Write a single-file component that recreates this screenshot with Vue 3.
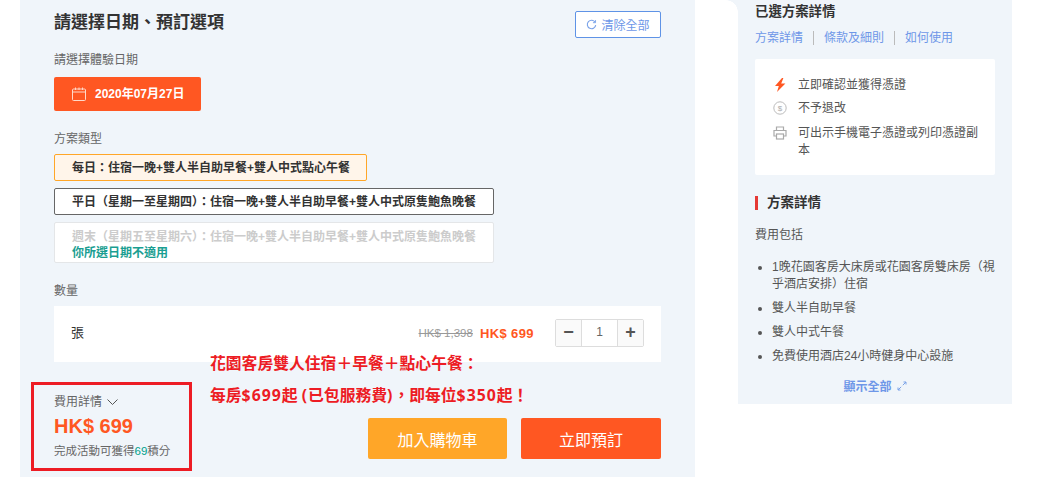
<script setup>
const includes = ['1晚花園客房大床房或花園客房雙床房（視乎酒店安排）住宿', '雙人半自助早餐', '雙人中式午餐', '免費使用酒店24小時健身中心設施']
</script>

<template>
  <div class="page">
    <section class="booking">
      <div class="heading-row">
        <h2>請選擇日期、預訂選項</h2>
        <button class="clear">
          <svg width="11" height="11" viewBox="0 0 12 12" fill="none" stroke="#7aa2e8" stroke-width="1.2"><path d="M10 3.6A4.6 4.6 0 1 0 10.6 6.6"/><path d="M10.4 1.2v2.8H7.6" stroke-width="1"/></svg>
          清除全部
        </button>
      </div>
      <div class="label date-label">請選擇體驗日期</div>
      <button class="date">
        <svg width="14" height="14" viewBox="0 0 14 14" fill="none" stroke="#ffd9c9" stroke-width="1"><rect x=".5" y="2" width="13" height="11.5" rx="1"/><path d="M.5 5h13M3.5 .5V3M7 .5V3M10.5 .5V3"/></svg>
        <span>2020年07月27日</span>
      </button>
      <div class="label type-label">方案類型</div>
      <div class="options">
        <div class="opt active">每日：住宿一晚+雙人半自助早餐+雙人中式點心午餐</div>
        <div class="opt normal">平日（星期一至星期四）：住宿一晚+雙人半自助早餐+雙人中式原隻鮑魚晚餐</div>
        <div class="opt off">
          <div>週末（星期五至星期六）：住宿一晚+雙人半自助早餐+雙人中式原隻鮑魚晚餐</div>
          <div class="off-note">你所選日期不適用</div>
        </div>
      </div>
      <div class="label qty-label">數量</div>
      <div class="qty">
        <span class="unit">張</span>
        <span class="old">HK$ 1,398</span>
        <span class="now">HK$ 699</span>
        <div class="stepper">
          <span class="step">−</span>
          <span class="val">1</span>
          <span class="step">+</span>
        </div>
      </div>
      <div class="footer">
        <div class="fee">
          <div class="fee-label">費用詳情
            <svg width="11" height="6" viewBox="0 0 11 6" fill="none" stroke="#555" stroke-width="1"><path d="M.5 .5l5 5 5-5"/></svg>
          </div>
          <div class="fee-price">HK$ 699</div>
          <div class="fee-note">完成活動可獲得<em>69</em>積分</div>
        </div>
        <div class="actions">
          <button class="cart">加入購物車</button>
          <button class="buy">立即預訂</button>
        </div>
      </div>
      <div class="promo">
        <p>花園客房雙人住宿＋早餐＋點心午餐：</p>
        <p>每房<span class="num">$699</span>起 <span class="num">(</span>已包服務費<span class="num">)</span>，即每位<span class="num">$350</span>起！</p>
      </div>
      <div class="redbox"></div>
    </section>

    <aside class="side">
      <h3>已選方案詳情</h3>
      <nav class="tabs">
        <a>方案詳情</a><i></i><a>條款及細則</a><i></i><a>如何使用</a>
      </nav>
      <div class="notes">
        <div class="note">
          <svg width="14" height="14" viewBox="0 0 14 14"><path d="M9 0 2 8h3.8L4 14 12.4 5.4H8.2L10.4 0z" fill="#ff5722"/></svg>
          <span>立即確認並獲得憑證</span>
        </div>
        <div class="note">
          <svg width="14" height="14" viewBox="0 0 14 14" fill="none"><circle cx="7" cy="7" r="6.2" stroke="#bbb"/><text x="7" y="10" text-anchor="middle" font-size="8" fill="#aaa" font-family="Liberation Sans">$</text></svg>
          <span>不予退改</span>
        </div>
        <div class="note print">
          <svg width="14" height="14" viewBox="0 0 14 14" fill="none" stroke="#aaa" stroke-width="1.2"><path d="M3.5 4V1h7v3"/><path d="M3 10H1V4.5h12V10h-2"/><rect x="3.5" y="8" width="7" height="5"/></svg>
          <span>可出示手機電子憑證或列印憑證副本</span>
        </div>
      </div>
      <h4>方案詳情</h4>
      <div class="inc-title">費用包括</div>
      <ul>
        <li v-for="t in includes" :key="t">{{ t }}</li>
      </ul>
      <a class="more">顯示全部
        <svg width="10" height="10" viewBox="0 0 10 10" fill="none" stroke="#7aa2e8" stroke-width="1"><path d="M5.8 4.2 9 1M6.5 1H9v2.5M4.2 5.8 1 9M3.5 9H1V6.5"/></svg>
      </a>
    </aside>
  </div>
</template>

<style>
html, body { margin: 0; background: #fff; }
</style>

<style scoped>
.page {
  width: 1045px;
  height: 477px;
  overflow: hidden;
  display: flex;
  align-items: flex-start;
  font-family: "Liberation Sans", "Noto Sans CJK TC", sans-serif;
  color: #333;
}
button { font-family: inherit; border: 0; cursor: pointer; padding: 0; }
.booking {
  position: relative;
  box-sizing: border-box;
  margin-left: 20px;
  width: 675px;
  height: 477px;
  padding: 11px 34px 0;
  background: #f0f5fa;
}
.heading-row { display: flex; justify-content: space-between; align-items: flex-start; height: 27px; }
h2 { margin: 0; font-size: 17px; line-height: 24px; font-weight: 700; color: #333; }
.clear {
  display: flex; align-items: center; justify-content: center; gap: 4px;
  box-sizing: border-box; width: 86px; height: 27px;
  background: #fff; border: 1px solid #5f93e6; border-radius: 2px;
  color: #6e97e8; font-size: 12px;
}
.label { font-size: 12px; line-height: 16px; color: #666; }
.date-label { margin-top: 14px; }
.date {
  display: flex; align-items: center; gap: 9px;
  box-sizing: border-box; width: 147px; height: 34px; margin-top: 9px; padding-left: 18px;
  background: #ff5722; border-radius: 2px; color: #fff; font-size: 12px; font-weight: 700;
}
.date span { padding-bottom: 3px; }
.type-label { margin-top: 20px; }
.options { margin-top: 7px; display: flex; flex-direction: column; align-items: flex-start; gap: 7px; }
.opt {
  box-sizing: border-box; height: 27px; padding: 0 17px;
  border-radius: 2px; font-size: 12px; line-height: 26px; font-weight: 700; color: #333;
  white-space: nowrap;
}
.active { width: 313px; background: #fff5ea; border: 1px solid #ffa628; }
.normal { width: 440px; background: #fff; border: 1px solid #666; }
.off { width: 440px; height: 41px; background: #fff; border: 1px solid #e4e6e8; padding-top: 6px; color: #ccc; line-height: 16px; }
.off-note { color: #1a9e92; font-size: 12px; line-height: 16px; }
.qty-label { margin-top: 20px; }
.qty {
  display: flex; align-items: center; box-sizing: border-box;
  width: 607px; height: 56px; margin-top: 7px; padding: 0 17px 2px;
  background: #fff; font-size: 12px;
}
.unit { flex: 1; font-size: 13px; color: #333; padding-bottom: 4px; }
.old { color: #999; text-decoration: line-through; font-size: 11.5px; margin-right: 7px; }
.now { color: #ff5722; font-weight: 700; font-size: 13px; letter-spacing: .4px; margin-right: 21px; }
.stepper {
  display: flex; box-sizing: border-box; height: 28px; width: 89px;
  border: 1px solid #ddd; border-radius: 2px;
}
.step { width: 25px; background: #fafafa; text-align: center; line-height: 25px; font-size: 18px; font-weight: 700; color: #555; }
.val { flex: 1; border-left: 1px solid #ddd; border-right: 1px solid #ddd; text-align: center; line-height: 24px; font-size: 12px; color: #666; }
.footer { display: flex; justify-content: space-between; margin-top: 32px; }
.fee-label { display: flex; align-items: center; gap: 5px; font-size: 12px; line-height: 16px; color: #666; }
.fee-price { font-size: 20px; line-height: 24px; font-weight: 700; color: #ff5722; margin-top: 4px; }
.fee-note { font-size: 11.5px; line-height: 16px; color: #666; margin-top: 5px; }
.fee-note em { font-style: normal; color: #00a08a; }
.actions { display: flex; gap: 14px; margin-top: 24px; }
.actions button { height: 41px; border-radius: 2px; color: #fff; font-size: 16px; }
.cart { width: 139px; background: #ffa628; }
.buy { width: 140px; background: #ff5722; }
.promo {
  position: absolute; left: 190px; top: 347px;
  color: #ed1c24; font-size: 15.8px; font-weight: 700; line-height: 32px;
  font-family: "Noto Sans", "Noto Sans CJK TC", sans-serif; white-space: nowrap;
}
.promo p { margin: 0; }
.num { letter-spacing: 1px; }
.redbox {
  position: absolute; left: 11px; top: 382px; width: 161px; height: 89px;
  box-sizing: border-box; border: 3px solid #ed1c24;
}
.side {
  position: relative;
  box-sizing: border-box; margin-left: 43px; width: 274px; height: 404px;
  padding: 3px 17px 0; background: #f0f5fa;
}
.side::before {
  content: "";
  position: absolute; left: -12px; top: 0; width: 12px; height: 12px;
  background: radial-gradient(circle at 0 100%, #fff 11.5px, #f0f5fa 12px);
}
h3 { margin: 0; font-size: 13.4px; line-height: 18px; font-weight: 700; color: #333; }
.tabs { display: flex; align-items: center; margin-top: 8px; font-size: 12px; line-height: 18px; color: #6e97e8; }
.tabs i { width: 1px; height: 14px; background: #bbb; margin: 0 10px; }
.notes {
  box-sizing: border-box; margin-top: 12px; height: 116px; padding: 18px 12px 0 18px;
  background: #fff; border-radius: 2px;
}
.note { display: flex; gap: 11px; font-size: 12px; line-height: 17px; color: #555; margin-bottom: 6px; }
.note svg { flex: none; margin-top: 1px; }
.print { margin-top: 8px; }
h4 {
  margin: 21px 0 0; padding-left: 9px; border-left: 3px solid #e53935;
  font-size: 13.5px; line-height: 14px; font-weight: 700; color: #333;
}
.inc-title { margin-top: 16px; font-size: 12px; line-height: 18px; color: #555; }
ul { margin: 15px 0 0; padding: 0 0 0 17px; font-size: 12px; line-height: 17px; color: #555; }
li { margin-bottom: 7px; }
.more {
  display: flex; align-items: center; justify-content: center; gap: 5px;
  margin-top: 12px; font-size: 12px; font-weight: 700; color: #6e97e8;
}
</style>
